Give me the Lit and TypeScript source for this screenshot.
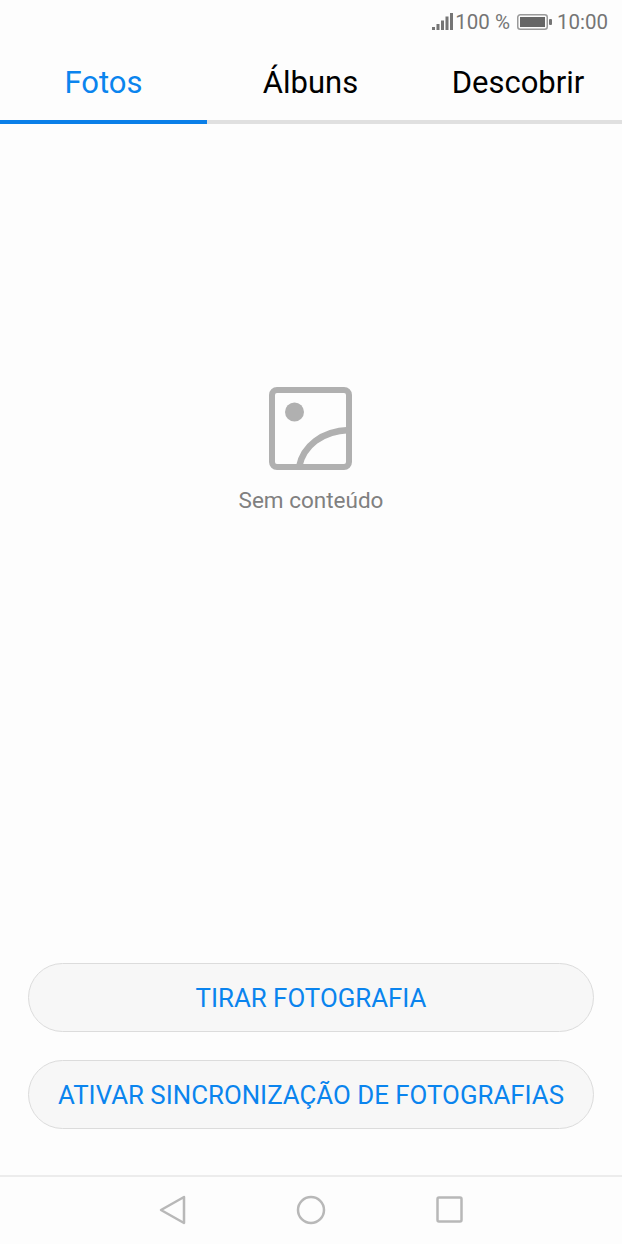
import { LitElement, html, css } from "lit"
import { customElement } from "lit/decorators.js"

@customElement("app-root")
export class AppRoot extends LitElement {
  static styles = css`
    :host {
      display: flex;
      flex-direction: column;
      width: 622px;
      height: 1244px;
      background: #fdfdfd;
      font-family: Roboto, "Liberation Sans", sans-serif;
      overflow: hidden;
    }
    .status {
      height: 44px;
      display: flex;
      align-items: center;
      justify-content: flex-end;
      padding-right: 14px;
      color: #757575;
      font-size: 20.5px;
      flex: none;
    }
    .signal { margin-right: 2px; }
    .battery { margin: 0 5px 0 7px; }
    .tabs {
      display: flex;
      height: 76px;
      flex: none;
      font-size: 31px;
      color: #000;
    }
    .tab {
      display: flex;
      align-items: center;
      justify-content: center;
      box-sizing: border-box;
    }
    .tab.t1 { width: 207px; color: #0a84ee; }
    .tab.t2 { width: 207px; }
    .tab.t3 { width: 208px; }
    .rule {
      display: flex;
      height: 4px;
      flex: none;
      background: #e0e0e0;
    }
    .rule div { width: 207px; background: #0a7fe8; }
    .main {
      flex: 1;
      display: flex;
      flex-direction: column;
      align-items: center;
      min-height: 0;
    }
    .empty {
      margin-top: 263px;
      display: flex;
      flex-direction: column;
      align-items: center;
      gap: 16px;
      color: #808080;
      font-size: 22.5px;
    }
    .empty svg { display: block; }
    .actions {
      margin-top: auto;
      align-self: stretch;
      display: flex;
      flex-direction: column;
      gap: 28px;
      padding: 0 28px 46px;
    }
    .btn {
      height: 69px;
      box-sizing: border-box;
      border: 1px solid #dcdcdc;
      border-radius: 35px;
      background: #f7f7f7;
      color: #0a84ee;
      font-size: 25.85px;
      display: flex;
      align-items: center;
      justify-content: center;
      white-space: nowrap;
    }
    .nav {
      height: 65px;
      flex: none;
      border-top: 2px solid #ececec;
      display: flex;
      align-items: center;
      justify-content: center;
      gap: 110px;
      padding-bottom: 2px;
    }
    .nav svg { display: block; }
  `

  render() {
    return html`
      <div class="status">
        <svg class="signal" width="21" height="20" viewBox="0 0 21 20" fill="#757575">
          <rect x="0" y="15" width="3" height="3" />
          <rect x="4.500" y="12" width="3" height="6" />
          <rect x="9" y="8.500" width="3" height="9.500" />
          <rect x="13.500" y="4.500" width="3" height="13.500" />
          <rect x="18" y="1" width="3" height="17" />
        </svg>
        <span>100 %</span>
        <svg class="battery" width="35" height="18" viewBox="0 0 35 18">
          <rect x="0.750" y="1.750" width="29.500" height="14.500" rx="2.500" fill="none" stroke="#9a9a9a" stroke-width="1.500" />
          <rect x="3" y="4" width="25" height="10" fill="#666" />
          <rect x="32" y="6" width="3" height="6" rx="1" fill="#757575" />
        </svg>
        <span>10:00</span>
      </div>
      <div class="tabs">
        <div class="tab t1">Fotos</div>
        <div class="tab t2">Álbuns</div>
        <div class="tab t3">Descobrir</div>
      </div>
      <div class="rule"><div></div></div>
      <div class="main">
        <div class="empty">
          <svg width="84" height="84" viewBox="0 0 84 84" fill="none" stroke="#b0b0b0" stroke-width="6">
            <rect x="3" y="3" width="77" height="77" rx="5" />
            <circle cx="25.500" cy="25" r="9.500" fill="#b0b0b0" stroke="none" />
            <path stroke-width="6.500" d="M30 80 C34 59 53 44 80 43" />
          </svg>
          <span>Sem conteúdo</span>
        </div>
        <div class="actions">
          <div class="btn">TIRAR FOTOGRAFIA</div>
          <div class="btn">ATIVAR SINCRONIZAÇÃO DE FOTOGRAFIAS</div>
        </div>
      </div>
      <div class="nav">
        <svg width="27" height="30" viewBox="0 0 27 30" fill="none" stroke="#b8b8b8" stroke-width="2.500" stroke-linejoin="round">
          <path d="M25 2 L2 15 L25 28 Z" />
        </svg>
        <svg width="30" height="30" viewBox="0 0 30 30" fill="none" stroke="#b8b8b8" stroke-width="2.500">
          <circle cx="15" cy="15" r="13" />
        </svg>
        <svg width="27" height="27" viewBox="0 0 27 27" fill="none" stroke="#b8b8b8" stroke-width="2.500" stroke-linejoin="round">
          <rect x="1.500" y="1.500" width="24" height="24" rx="1.500" />
        </svg>
      </div>
    `
  }
}
